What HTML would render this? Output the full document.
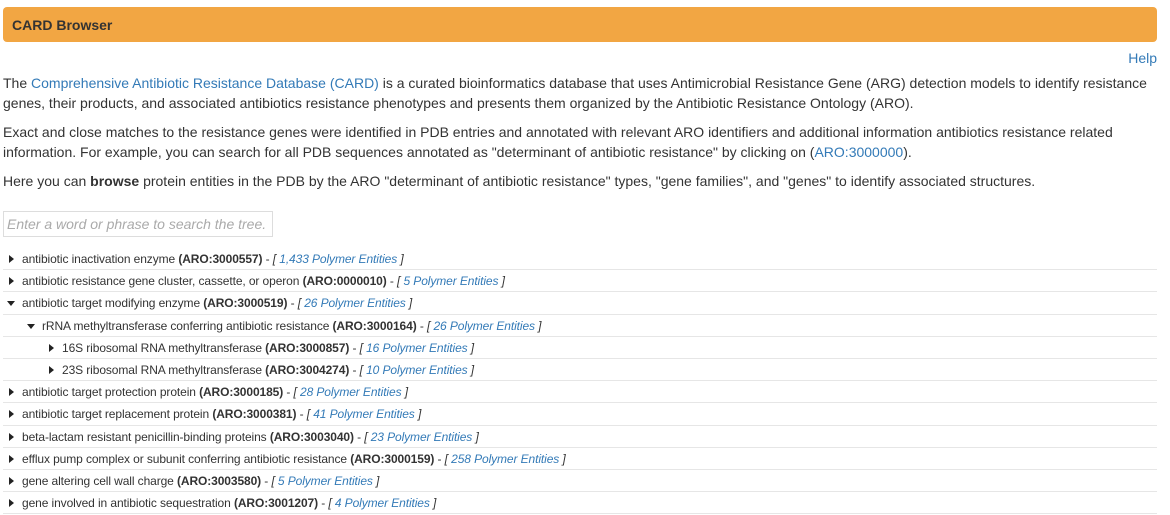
<!DOCTYPE html>
<html><head><meta charset="utf-8"><style>
body{margin:0;background:#fff;font-family:"Liberation Sans",sans-serif;color:#333;width:1170px;height:515px;overflow:hidden}
.hdr{position:absolute;left:3px;top:7px;width:1154px;height:35px;background:#f2a643;border-radius:4px;box-sizing:border-box;padding-left:9px;font-weight:bold;font-size:14px;line-height:36px;color:#333}
.help{position:absolute;right:13px;top:50px;font-size:14px;color:#337ab7}
.p{position:absolute;left:3px;width:1150px;font-size:14px;line-height:20px;margin:0}
a{color:#337ab7;text-decoration:none}
.search{position:absolute;left:3px;top:211px;width:270px;height:26px;border:1px solid #ddd;box-sizing:border-box;font-style:italic;color:#aaa;font-size:14px;line-height:24px;padding-left:3px}
.tree{position:absolute;left:3px;top:248px;width:1154px}
.r{height:21.2px;border-bottom:1px solid #e6e6e6;font-size:12px;line-height:22px;position:relative;white-space:nowrap;letter-spacing:-0.1px}
.r .t{position:absolute;top:7px;width:0;height:0}
.c .t{border-top:4px solid transparent;border-bottom:4px solid transparent;border-left:5px solid #222}
.o .t{top:9px;border-left:4px solid transparent;border-right:4px solid transparent;border-top:5px solid #222}
.r i{color:#333}
.r i a{color:#337ab7}
</style></head><body>
<div class="hdr">CARD Browser</div>
<div class="help">Help</div>
<p class="p" style="top:73px">The <a>Comprehensive Antibiotic Resistance Database (CARD)</a> is a curated bioinformatics database that uses Antimicrobial Resistance Gene (ARG) detection models to identify resistance genes, their products, and associated antibiotics resistance phenotypes and presents them organized by the Antibiotic Resistance Ontology (ARO).</p>
<p class="p" style="top:122px">Exact and close matches to the resistance genes were identified in PDB entries and annotated with relevant ARO identifiers and additional information antibiotics resistance related information. For example, you can search for all PDB sequences annotated as "determinant of antibiotic resistance" by clicking on (<a>ARO:3000000</a>).</p>
<p class="p" style="top:171px">Here you can <b>browse</b> protein entities in the PDB by the ARO "determinant of antibiotic resistance" types, "gene families", and "genes" to identify associated structures.</p>
<div class="search">Enter a word or phrase to search the tree.</div>
<div class="tree">
<div class="r c"><span class="t" style="left:6px"></span><span style="position:absolute;left:19px">antibiotic inactivation enzyme <b>(ARO:3000557)</b> - <i>[ <a>1,433 Polymer Entities</a> ]</i></span></div>
<div class="r c"><span class="t" style="left:6px"></span><span style="position:absolute;left:19px">antibiotic resistance gene cluster, cassette, or operon <b>(ARO:0000010)</b> - <i>[ <a>5 Polymer Entities</a> ]</i></span></div>
<div class="r o"><span class="t" style="left:4px"></span><span style="position:absolute;left:19px">antibiotic target modifying enzyme <b>(ARO:3000519)</b> - <i>[ <a>26 Polymer Entities</a> ]</i></span></div>
<div class="r o"><span class="t" style="left:24px"></span><span style="position:absolute;left:39px">rRNA methyltransferase conferring antibiotic resistance <b>(ARO:3000164)</b> - <i>[ <a>26 Polymer Entities</a> ]</i></span></div>
<div class="r c"><span class="t" style="left:46px"></span><span style="position:absolute;left:59px">16S ribosomal RNA methyltransferase <b>(ARO:3000857)</b> - <i>[ <a>16 Polymer Entities</a> ]</i></span></div>
<div class="r c"><span class="t" style="left:46px"></span><span style="position:absolute;left:59px">23S ribosomal RNA methyltransferase <b>(ARO:3004274)</b> - <i>[ <a>10 Polymer Entities</a> ]</i></span></div>
<div class="r c"><span class="t" style="left:6px"></span><span style="position:absolute;left:19px">antibiotic target protection protein <b>(ARO:3000185)</b> - <i>[ <a>28 Polymer Entities</a> ]</i></span></div>
<div class="r c"><span class="t" style="left:6px"></span><span style="position:absolute;left:19px">antibiotic target replacement protein <b>(ARO:3000381)</b> - <i>[ <a>41 Polymer Entities</a> ]</i></span></div>
<div class="r c"><span class="t" style="left:6px"></span><span style="position:absolute;left:19px">beta-lactam resistant penicillin-binding proteins <b>(ARO:3003040)</b> - <i>[ <a>23 Polymer Entities</a> ]</i></span></div>
<div class="r c"><span class="t" style="left:6px"></span><span style="position:absolute;left:19px">efflux pump complex or subunit conferring antibiotic resistance <b>(ARO:3000159)</b> - <i>[ <a>258 Polymer Entities</a> ]</i></span></div>
<div class="r c"><span class="t" style="left:6px"></span><span style="position:absolute;left:19px">gene altering cell wall charge <b>(ARO:3003580)</b> - <i>[ <a>5 Polymer Entities</a> ]</i></span></div>
<div class="r c"><span class="t" style="left:6px"></span><span style="position:absolute;left:19px">gene involved in antibiotic sequestration <b>(ARO:3001207)</b> - <i>[ <a>4 Polymer Entities</a> ]</i></span></div>
</div>
</body></html>
